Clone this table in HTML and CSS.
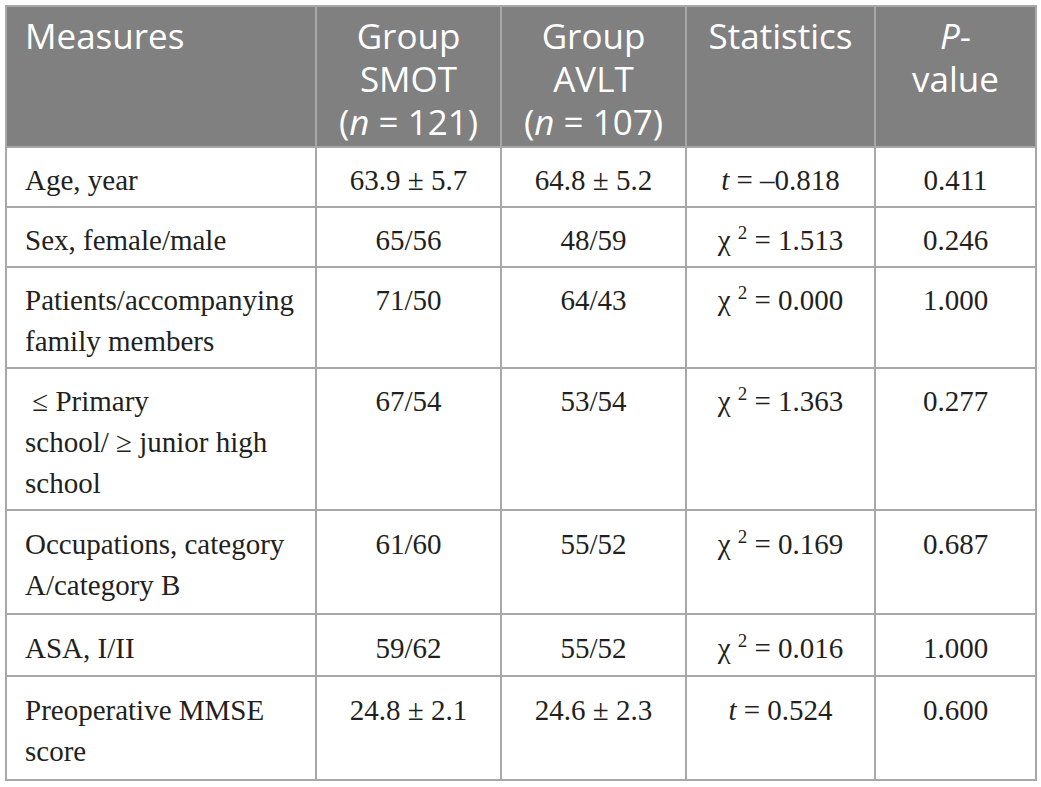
FILE: index.html
```html
<!doctype html>
<html lang="en">
  <head>
    <meta charset="UTF-8" />
    <meta name="viewport" content="width=device-width, initial-scale=1.0" />
    <title>Baseline characteristics</title>
    <link rel="stylesheet" href="styles.css">
  </head>
  <body>
    <table class="data-table">
      <colgroup>
        <col class="col-measure" />
        <col class="col-group" />
        <col class="col-group" />
        <col class="col-stats" />
        <col class="col-p" />
      </colgroup>
      <thead>
        <tr>
          <th class="left">Measures</th>
          <th>Group<br />SMOT<br />(<i>n</i> = 121)</th>
          <th>Group<br />AVLT<br />(<i>n</i> = 107)</th>
          <th>Statistics</th>
          <th><i>P</i>-<br />value</th>
        </tr>
      </thead>
      <tbody>
        <tr>
          <td class="left">Age, year</td>
          <td>63.9 ± 5.7</td>
          <td>64.8 ± 5.2</td>
          <td><i>t</i> = –0.818</td>
          <td>0.411</td>
        </tr>
        <tr>
          <td class="left">Sex, female/male</td>
          <td>65/56</td>
          <td>48/59</td>
          <td>χ <sup>2</sup> = 1.513</td>
          <td>0.246</td>
        </tr>
        <tr>
          <td class="left">Patients/accompanying family members</td>
          <td>71/50</td>
          <td>64/43</td>
          <td>χ <sup>2</sup> = 0.000</td>
          <td>1.000</td>
        </tr>
        <tr>
          <td class="left">&nbsp;≤ Primary<br />school/ ≥ junior high<br />school</td>
          <td>67/54</td>
          <td>53/54</td>
          <td>χ <sup>2</sup> = 1.363</td>
          <td>0.277</td>
        </tr>
        <tr class="tall">
          <td class="left">Occupations, category A/category B</td>
          <td>61/60</td>
          <td>55/52</td>
          <td>χ <sup>2</sup> = 0.169</td>
          <td>0.687</td>
        </tr>
        <tr class="mid">
          <td class="left">ASA, I/II</td>
          <td>59/62</td>
          <td>55/52</td>
          <td>χ <sup>2</sup> = 0.016</td>
          <td>1.000</td>
        </tr>
        <tr class="tall">
          <td class="left">Preoperative MMSE score</td>
          <td>24.8 ± 2.1</td>
          <td>24.6 ± 2.3</td>
          <td><i>t</i> = 0.524</td>
          <td>0.600</td>
        </tr>
      </tbody>
    </table>
  </body>
</html>
```

FILE: styles.css
```css
* {
  margin: 0;
  padding: 0;
  box-sizing: border-box;
}

body {
  background: #fff;
  padding: 5px 5px;
}

/* Table frame */
.data-table {
  border-collapse: collapse;
  width: 1030px;
  table-layout: fixed;
  border: 2px solid #a8a8a8;
}

.col-measure {
  width: 310px;
}

.col-group {
  width: 185px;
}

.col-stats {
  width: 189px;
}

.col-p {
  width: 161px;
}

.data-table th,
.data-table td {
  border: 2px solid #a8a8a8;
  vertical-align: top;
  text-align: center;
}

/* Header row */
.data-table th {
  background: #808080;
  color: #fff;
  font-family: "Open Sans", "DejaVu Sans", sans-serif;
  font-weight: 400;
  font-size: 35px;
  line-height: 43px;
  padding: 7px 14px 3px;
}

/* Body cells */
.data-table td {
  font-family: "Liberation Serif", "DejaVu Serif", serif;
  font-size: 29px;
  line-height: 41px;
  color: #231f20;
  padding: 12px 18px 5px;
}

.data-table .left {
  text-align: left;
  padding-left: 18px;
}

.data-table tr.tall td {
  padding-top: 13px;
  padding-bottom: 7px;
}

.data-table tr.mid td {
  padding-top: 13px;
  padding-bottom: 6px;
}

sup {
  font-size: 19px;
  line-height: 0;
  vertical-align: 11px;
}
```
